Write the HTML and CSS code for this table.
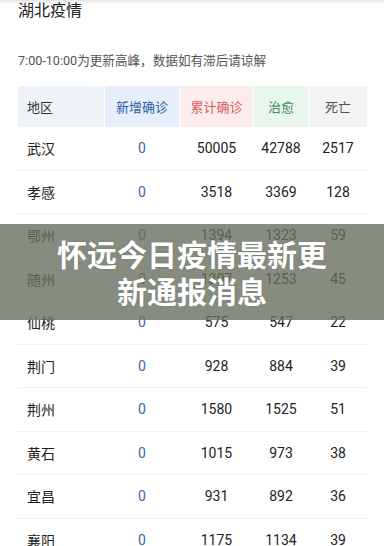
FILE: index.html
```html
<!DOCTYPE html>
<html lang="zh">
<head>
<meta charset="utf-8">
<link rel="stylesheet" href="styles.css">
</head>
<body>
<div class="page">
  <h1 class="title">湖北疫情</h1>
  <p class="note">7:00-10:00为更新高峰，数据如有滞后请谅解</p>
  <div class="table">
    <div class="row head">
      <div class="c c-area">地区</div>
      <div class="c c-new">新增确诊</div>
      <div class="c c-total">累计确诊</div>
      <div class="c c-cure">治愈</div>
      <div class="c c-dead">死亡</div>
    </div>
    <div class="row"><div class="c c-area">武汉</div><div class="c c-new">0</div><div class="c">50005</div><div class="c">42788</div><div class="c">2517</div></div>
    <div class="row"><div class="c c-area">孝感</div><div class="c c-new">0</div><div class="c">3518</div><div class="c">3369</div><div class="c">128</div></div>
    <div class="row"><div class="c c-area">鄂州</div><div class="c c-new">0</div><div class="c">1394</div><div class="c">1323</div><div class="c">59</div></div>
    <div class="row"><div class="c c-area">随州</div><div class="c c-new">0</div><div class="c">1307</div><div class="c">1253</div><div class="c">45</div></div>
    <div class="row"><div class="c c-area">仙桃</div><div class="c c-new">0</div><div class="c">575</div><div class="c">547</div><div class="c">22</div></div>
    <div class="row"><div class="c c-area">荆门</div><div class="c c-new">0</div><div class="c">928</div><div class="c">884</div><div class="c">39</div></div>
    <div class="row"><div class="c c-area">荆州</div><div class="c c-new">0</div><div class="c">1580</div><div class="c">1525</div><div class="c">51</div></div>
    <div class="row"><div class="c c-area">黄石</div><div class="c c-new">0</div><div class="c">1015</div><div class="c">973</div><div class="c">38</div></div>
    <div class="row"><div class="c c-area">宜昌</div><div class="c c-new">0</div><div class="c">931</div><div class="c">892</div><div class="c">36</div></div>
    <div class="row"><div class="c c-area">襄阳</div><div class="c c-new">0</div><div class="c">1175</div><div class="c">1134</div><div class="c">39</div></div>
  </div>
</div>
<div class="banner">
  <h2 class="banner-title">怀远今日疫情最新更<br>新通报消息</h2>
</div>
</body>
</html>
```

FILE: styles.css
```css
html, body {
  margin: 0;
  padding: 0;
}
body {
  width: 384px;
  height: 546px;
  overflow: hidden;
  position: relative;
  background: linear-gradient(#e4e4e4, #ffffff 4px);
  font-family: Roboto, "Noto Sans CJK SC", sans-serif;
  color: #222;
}
.page {
  padding: 0 17px 0 18px;
}
.title {
  margin: 0;
  font-size: 16px;
  line-height: 22px;
  font-weight: 400;
  color: #222;
}
.note {
  margin: 30px 0 0;
  font-size: 12.6px;
  line-height: 18px;
  color: #555;
}
.table {
  margin-top: 16px;
}
.row {
  display: grid;
  grid-template-columns: 86px 74px 73px 54px 58px;
  column-gap: 1px;
  height: 43.5px;
  align-items: center;
  border-bottom: 1px solid #f1f1f1;
  box-sizing: border-box;
  font-size: 14px;
}
.row.head {
  height: 41px;
  border-bottom: none;
  align-items: stretch;
  font-size: 13px;
}
.c {
  text-align: center;
}
.c-area {
  text-align: left;
  padding-left: 9px;
}
.c-new {
  color: #3a67a6;
}
.head .c {
  display: flex;
  align-items: center;
  justify-content: center;
}
.head .c-area {
  justify-content: flex-start;
  background: #eff3f8;
  color: #333;
}
.head .c-new {
  background: #e6eefa;
  color: #2f5c9e;
}
.head .c-total {
  background: #fcecec;
  color: #d95c5c;
}
.head .c-cure {
  background: #e9f6ee;
  color: #3f8a5c;
}
.head .c-dead {
  background: #f3f3f3;
  color: #555;
}
.banner {
  position: absolute;
  left: 0;
  top: 224px;
  width: 384px;
  height: 96px;
  background: rgba(104, 111, 94, 0.8);
  display: flex;
  align-items: center;
  justify-content: center;
}
.banner-title {
  margin: 0;
  text-align: center;
  color: #fff;
  font-family: "Noto Sans CJK SC", sans-serif;
  font-weight: 700;
  font-size: 30px;
  line-height: 37px;
  text-shadow: 0 0 2px rgba(0,0,0,0.15);
}
```
